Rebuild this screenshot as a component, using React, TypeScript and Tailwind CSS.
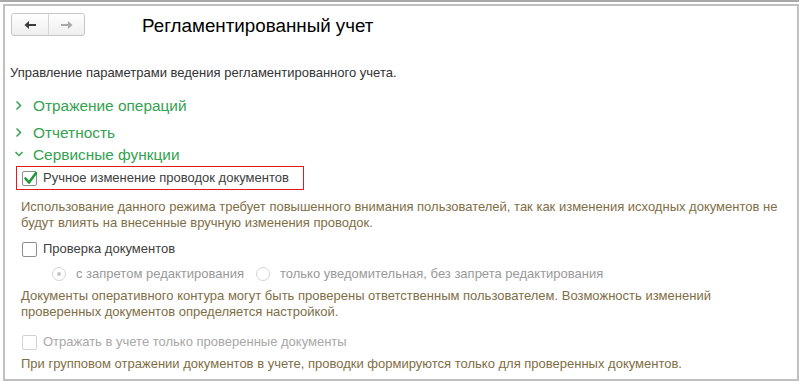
import React from 'react';

const font = { fontFamily: '"Liberation Sans", Arial, sans-serif' };

function Chevron({ open }: { readonly open?: boolean }): JSX.Element {
  return open ? (
    <svg width="10" height="10" viewBox="0 0 10 10" className="mr-[9px]">
      <path d="M1.5 3 L5 6.5 L8.5 3" fill="none" stroke="#34a251" strokeWidth="1.5" />
    </svg>
  ) : (
    <svg width="10" height="11" viewBox="0 0 10 11" className="mr-[9px]">
      <path d="M2.5 1.5 L6.5 5.5 L2.5 9.5" fill="none" stroke="#34a251" strokeWidth="1.5" />
    </svg>
  );
}

function GroupTitle({
  title,
  open,
  className,
}: {
  readonly title: string;
  readonly open?: boolean;
  readonly className: string;
}): JSX.Element {
  return (
    <div className={`flex pl-[9px] ${className}`}>
      <div className="flex items-center">
        <Chevron open={open} />
        <span className="text-[15.4px] text-[#34a251]">{title}</span>
      </div>
    </div>
  );
}

function CheckBox({
  checked,
  disabled,
}: {
  readonly checked?: boolean;
  readonly disabled?: boolean;
}): JSX.Element {
  return (
    <span
      className={`relative mr-[6px] inline-block h-[15px] w-[15px] shrink-0 rounded-[2px] border bg-white ${
        disabled ? 'border-[#d2d2d2]' : 'border-[#8e8e8e]'
      }`}
    >
      {checked && (
        <svg
          width="15"
          height="15"
          viewBox="0 0 15 15"
          className="absolute left-[0px] top-[-1px]"
        >
          <path
            d="M2.5 7.5 L6 11.5 L13 2"
            fill="none"
            stroke="#21993a"
            strokeWidth="2.6"
            strokeLinecap="round"
            strokeLinejoin="round"
          />
        </svg>
      )}
    </span>
  );
}

function Radio({ dot }: { readonly dot?: boolean }): JSX.Element {
  return (
    <span className="mr-[10px] flex h-[14px] w-[14px] items-center justify-center rounded-full border border-[#d4d4d4] bg-white">
      {dot && <span className="h-[4px] w-[4px] rounded-full bg-[#c4c4c4]" />}
    </span>
  );
}

export default function App(): JSX.Element {
  return (
    <div className="h-[391px] w-[811px] bg-white text-[13px]" style={font}>
      <div className="h-[2px] w-[799px] bg-[#a8a8a8]" />
      <div className="ml-[3px] mt-[2px] h-[377px] w-[796px] border-2 border-[#c0c0c0]">
        <div className="ml-[6px] mt-[7px] flex h-[23px] items-center">
          <div className="flex h-[23px] w-[74px] rounded-[3px] border border-[#c6c6c6] bg-gradient-to-b from-white to-[#eeeeee]">
            <div className="flex w-[37px] items-center justify-center border-r border-[#d6d6d6]">
              <svg width="13" height="10" viewBox="0 0 13 10">
                <path d="M0.5 5 L5 1 L5 4 L12 4 L12 6 L5 6 L5 9 Z" fill="#3c3c3c" />
              </svg>
            </div>
            <div className="flex flex-1 items-center justify-center">
              <svg width="13" height="10" viewBox="0 0 13 10">
                <path d="M12.5 5 L8 1 L8 4 L1 4 L1 6 L8 6 L8 9 Z" fill="#a9a9a9" />
              </svg>
            </div>
          </div>
          <h1 className="ml-[57px] mt-[3px] text-[18.8px] text-black">Регламентированный учет</h1>
        </div>

        <div className="ml-[5px] mt-[29px] flex h-[16px] items-center text-[#333333]">
          Управление параметрами ведения регламентированного учета.
        </div>

        <div className="mt-[11px]">
          <GroupTitle title="Отражение операций" className="h-[27px] items-center" />
          <GroupTitle title="Отчетность" className="h-[27px] items-center" />
          <GroupTitle title="Сервисные функции" open className="h-[20px] items-end" />
        </div>

        <div className="ml-[11px] flex h-[24px] w-[288px] items-center border border-[#e31b1b] pl-[5px] text-[#404040]">
          <CheckBox checked />
          Ручное изменение проводок документов
        </div>

        <div className="ml-[16px] mt-[9px] whitespace-nowrap leading-[16px] text-[#7f6e45]">
          Использование данного режима требует повышенного внимания пользователей, так как изменения исходных документов не
          <br />
          будут влиять на внесенные вручную изменения проводок.
        </div>

        <div className="ml-[17px] mt-[7px] flex h-[22px] items-center text-[#404040]">
          <CheckBox />
          Проверка документов
        </div>

        <div className="ml-[47px] mt-[3px] flex h-[22px] items-center text-[#999999]">
          <Radio dot />
          <span className="mr-[12px]">с запретом редактирования</span>
          <Radio />
          <span>только уведомительная, без запрета редактирования</span>
        </div>

        <div className="ml-[16px] mt-[3px] whitespace-nowrap leading-[16px] text-[#7f6e45]">
          Документы оперативного контура могут быть проверены ответственным пользователем. Возможность изменений
          <br />
          проверенных документов определяется настройкой.
        </div>

        <div className="ml-[17px] mt-[12px] flex h-[20px] items-center text-[#a8a8a8]">
          <CheckBox disabled />
          Отражать в учете только проверенные документы
        </div>

        <div className="ml-[16px] mt-[4px] flex h-[16px] items-center text-[#7f6e45]">
          При групповом отражении документов в учете, проводки формируются только для проверенных документов.
        </div>
      </div>
    </div>
  );
}
